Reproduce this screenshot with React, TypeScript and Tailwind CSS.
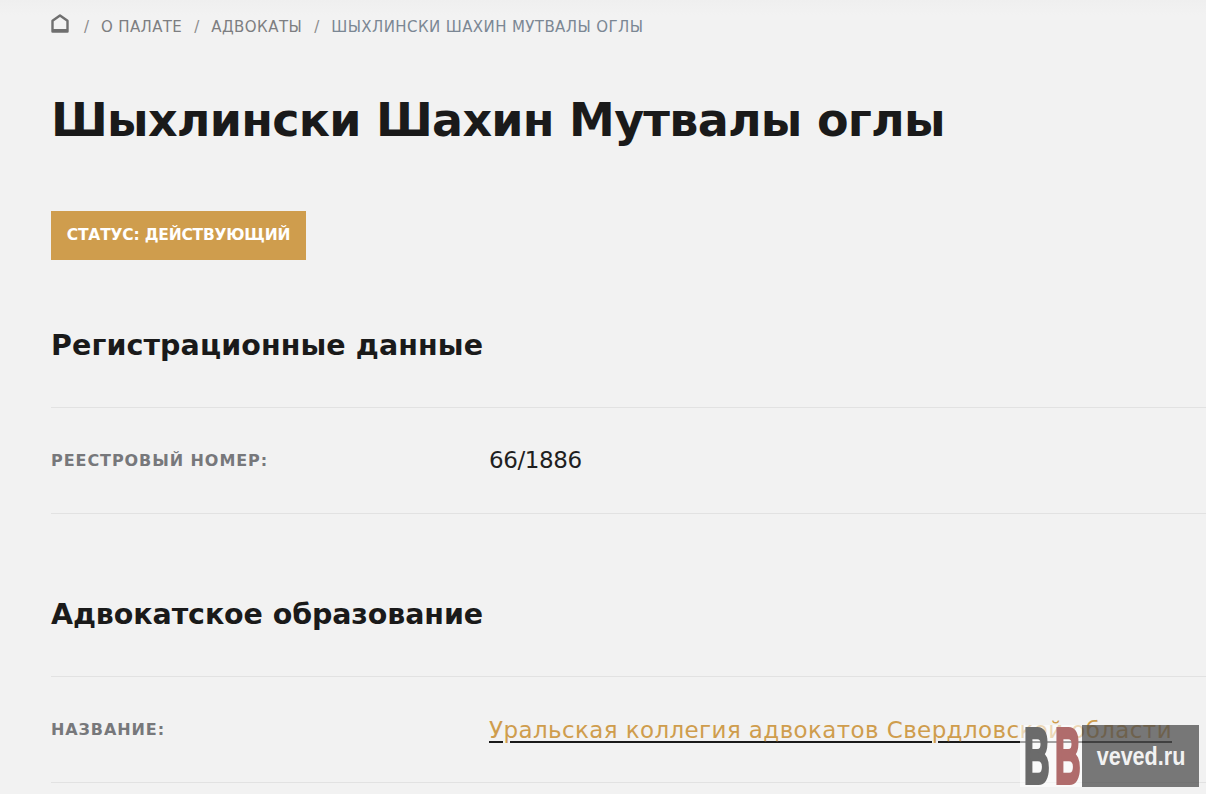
export default function App() {
  const font = { fontFamily: '"DejaVu Sans", Inter, sans-serif' };
  return (
    <div style={font} className="relative h-[794px] w-[1206px] overflow-hidden bg-[#f2f2f2] text-[#1a1a1a]">
      <div className="h-[15px] bg-gradient-to-b from-[#efefef] to-[#f2f2f2]" />
      <div className="pl-[51px]">
        <nav className="flex h-[24px] items-center text-[15px] text-[#7d7e81]">
          <svg width="18" height="19" viewBox="0 0 18 19" className="mt-[-7px] text-[#6f6f6f]" fill="none" stroke="currentColor" strokeWidth="2.4">
            <path d="M1.5 17.5V6.8L9 1.5l7.5 5.3v10.7z" strokeLinejoin="round" />
            <path d="M2 16.5h14" strokeWidth="3" />
          </svg>
          <span className="ml-[15px] mr-[12px] text-[#8b8b8b]">/</span>
          <span className="tracking-[0.35px]">О ПАЛАТЕ</span>
          <span className="mx-[12px] text-[#8b8b8b]">/</span>
          <span className="tracking-[0.45px]">АДВОКАТЫ</span>
          <span className="mx-[12px] text-[#8b8b8b]">/</span>
          <span className="tracking-[0.4px] text-[#7b8794]">ШЫХЛИНСКИ ШАХИН МУТВАЛЫ ОГЛЫ</span>
        </nav>
        <h1 className="mt-[51px] text-[46px] font-bold leading-[60px] tracking-[-0.75px] text-[#1a1a1a]">Шыхлински Шахин Мутвалы оглы</h1>
        <div className="mt-[61px] flex h-[49px] w-[255px] items-center justify-center bg-[#cf9d4d] text-[15.5px] font-bold tracking-[-0.2px] text-white">
          СТАТУС: ДЕЙСТВУЮЩИЙ
        </div>
        <h2 className="mt-[66px] h-[40px] text-[28.5px] font-bold leading-[40px] tracking-[0.1px]">Регистрационные данные</h2>
        <div className="mt-[41px] flex h-[107px] items-center border-y border-[#e2e2e2]">
          <div className="w-[438px] text-[16px] font-bold tracking-[0.93px] text-[#77787b]">РЕЕСТРОВЫЙ НОМЕР:</div>
          <div className="text-[23px] tracking-[-0.4px] text-[#1f1f1f]">66/1886</div>
        </div>
        <h2 className="mt-[81px] h-[40px] text-[28.5px] font-bold leading-[40px] tracking-[-0.1px]">Адвокатское образование</h2>
        <div className="mt-[41px] flex h-[107px] items-center border-y border-[#e2e2e2]">
          <div className="w-[438px] text-[16px] font-bold tracking-[0.9px] text-[#77787b]">НАЗВАНИЕ:</div>
          <div className="whitespace-nowrap pt-[1px] text-[23px] tracking-[0.39px] text-[#cf9d4d] underline decoration-[#1a1a1a] decoration-2 underline-offset-[3px]">Уральская коллегия адвокатов Свердловской области</div>
        </div>
      </div>
      <div className="absolute left-[1020px] top-[725px] flex h-[62px] w-[179px]">
        <div className="relative h-[62px] w-[62px] bg-white/60">
          <svg width="62" height="88" viewBox="0 0 62 88" className="absolute left-0 top-[-13px]" fontFamily="Liberation Sans, sans-serif" fontWeight="700" fontSize="77" strokeWidth="4">
            <text transform="translate(4 71) scale(0.46 1)">
              <tspan fill="#6b6b6b" stroke="#6b6b6b">B</tspan>
              <tspan dx="11.7" fill="#b06c6c" stroke="#b06c6c">B</tspan>
            </text>
          </svg>
        </div>
        <svg width="117" height="62" viewBox="0 0 117 62" className="bg-[#4d4d4d]/75" fontFamily="Liberation Sans, sans-serif" fontWeight="700" fontSize="26">
          <text transform="translate(59 40) scale(0.83 1)" textAnchor="middle" fill="#f2f2f2">veved.ru</text>
        </svg>
      </div>
    </div>
  );
}
